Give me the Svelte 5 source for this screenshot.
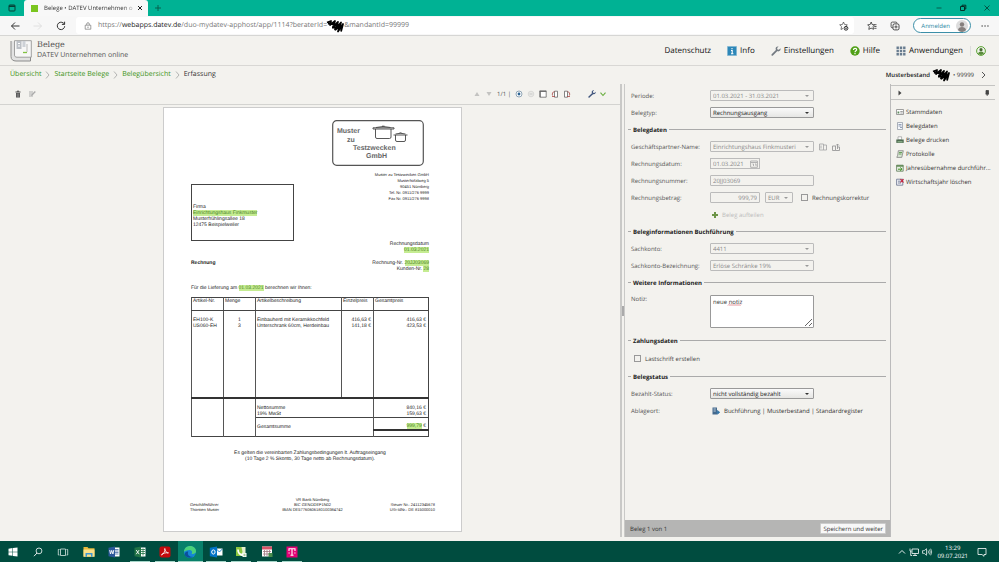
<script>
  const crumbs = ['Übersicht', 'Startseite Belege', 'Belegübersicht'];
  const tasks = [
    ['card', 'Stammdaten'],
    ['doc', 'Belegdaten'],
    ['print', 'Belege drucken'],
    ['log', 'Protokolle'],
    ['year', 'Jahresübernahme durchführ...'],
    ['del', 'Wirtschaftsjahr löschen']
  ];
  const apps = ['files', 'word', 'excel', 'pdf', 'edge', 'outlook', 'notes', 'calendar', 'telekom'];
  let note = $state('neue notiz');
</script>

{#snippet scribble()}
  <svg class="scribble" viewBox="0 0 17 14" aria-hidden="true">
    <path d="M0 3.500 4 2 3 6 8 2 6 8 11 3 8 10.500 14 3.500 11 12.500 16 5 14 12.500M1 4.500 14 6M5 8.500H15M8 11 13 7" fill="none" stroke="#000" stroke-width="1.800" stroke-linejoin="round" />
  </svg>
{/snippet}

{#snippet wrench(color)}
  <svg viewBox="0 0 10 10" class="i10" aria-hidden="true">
    <path d="M1.300 8.800 5.500 4.600" stroke={color} stroke-width="1.800" stroke-linecap="round" />
    <path d="M9.500 2.300 7.900 3.800 6.400 3.500 6.100 2 7.600.5C5.600.1 4.200 1.500 4.700 3.400L6.500 5.300C8.500 5.800 10 4.300 9.500 2.300Z" fill={color} />
  </svg>
{/snippet}

{#snippet taskIcon(kind)}
  <svg viewBox="0 0 8 8" class="i8" aria-hidden="true">
    {#if kind === 'card'}
      <path d="M.5 1.500h7v5h-7z" fill="#fff" stroke="#888" stroke-width=".8" /><path d="M1.500 3.500h1.800v2H1.500z" fill="#5d8a5d" /><path d="M4.300 3.500h2.500M4.300 5h2.500" stroke="#777" stroke-width=".7" />
    {:else if kind === 'doc'}
      <path d="M1.500.5h5v7h-5z" fill="#f4f7fb" stroke="#8b93a0" stroke-width=".7" /><path d="M2.500 2.500h3M2.500 4h3M4 5.500h2" stroke="#7c8ca8" stroke-width=".8" />
    {:else if kind === 'print'}
      <path d="M2 .8h3.600v3H2z" fill="#fff" stroke="#888" stroke-width=".6" /><path d="M.3 3.500h7.400v3.400H.3z" fill="#4d6b50" /><path d="M1.500 5.300h5v1h-5z" fill="#9fc49b" />
    {:else if kind === 'log'}
      <path d="M2.300.7h5L5.800 7.400H.8l.9-2.200z" fill="#d9e6d5" stroke="#777" stroke-width=".7" /><path d="M3 2.500h3M2.800 4h2.800" stroke="#4c8b3d" stroke-width=".8" />
    {:else if kind === 'year'}
      <path d="M.6 1.200h6.600v6H.6z" fill="#e9efe6" stroke="#5a7a55" stroke-width=".8" /><path d="M.6 1.200h6.600v1.500H.6z" fill="#5d8750" /><path d="M2 5.200h3.800M4.300 3.500 6 5.200 4.300 6.900" fill="none" stroke="#3c8f1e" stroke-width="1" />
    {:else}
      <path d="M.6 1.200h6.200v6H.6z" fill="#eef0f6" stroke="#66708c" stroke-width=".8" /><path d="M2 3.200h3M2 5h3" stroke="#66708c" stroke-width=".8" /><path d="m4.500 1 3 3.500m0-3.500-3 3.500" stroke="#c8102e" stroke-width="1.100" />
    {/if}
  </svg>
{/snippet}

{#snippet appIcon(kind)}
  <svg viewBox="0 0 14 14" class="i14" aria-hidden="true">
    {#if kind === 'files'}
      <path d="M1.500 2h4l1 1.200h6v8.300h-11z" fill="#e8b93c" /><path d="M1.500 4.500h11v7.300h-11z" fill="#fbe08a" /><path d="M3.500 8h7v3.800H9V9.600H5v2.200H3.500z" fill="#3f97d3" />
    {:else if kind === 'word' || kind === 'excel'}
      <path d="M7 2.500h5.500v9H7z" fill="#fff" />
      {#if kind === 'word'}
        <path d="M8 4.500h3.500M8 6h3.500M8 7.500h3.500M8 9h3.500" stroke="#2b579a" stroke-width=".7" />
      {:else}
        <path d="M8 4.500h4M8 6.500h4M8 8.500h4M10 3.500v7" stroke="#217346" stroke-width=".8" />
      {/if}
      <path d="M1.500 2.700 8 1.500v11L1.500 11.300z" fill={kind === 'word' ? '#2b579a' : '#217346'} />
      <path d={kind === 'word' ? 'M2.700 5l.8 4 1.200-3.600L5.900 9l.9-4' : 'M3.200 5l3 4.200m0-4.200-3 4.200'} fill="none" stroke="#fff" stroke-width=".9" />
    {:else if kind === 'pdf'}
      <rect x="1.500" y="1.500" width="11" height="11" rx="2" fill="#c4090d" /><path d="M6.800 3.500c.9 2-1.500 5.800-3.300 6.600-.8-.8 3.500-2.800 7-2.300C9.500 9 6.500 5.500 6.800 3.500Z" fill="none" stroke="#fff" stroke-width=".8" />
    {:else if kind === 'edge'}
      <circle cx="7" cy="7" r="6" fill="#1687d4" /><path d="M1 7C1 3 4 1 7 1c4 0 6 2.700 6 5.300C13 8.500 11 9.300 8.600 9c1.200-1.700.3-4-2.200-4C3.700 5 1.600 6 1 7Z" fill="#4bd17a" /><path d="M5.300 6.600c-1.400 2.900.8 5.700 4.500 5.200-2.700 1.900-6.500.8-8-1.800C1.500 8 3 6.200 5.300 6.600Z" fill="#0c4f9c" />
    {:else if kind === 'outlook'}
      <path d="M7 3.500h6.500v7H7z" fill="#fff" /><path d="m7.500 4 2.900 3 2.900-3" fill="none" stroke="#0072c6" stroke-width=".8" /><path d="M.8 2.700 8 1.500v11L.8 11.300z" fill="#0072c6" /><ellipse cx="4.400" cy="7" rx="1.700" ry="2.100" fill="none" stroke="#fff" stroke-width="1" />
    {:else if kind === 'notes'}
      <path d="M2 2h9.500v9H2z" fill="#e5efcf" /><path d="M2 2h5.500l1 5-2 4H2z" fill="#8cc63f" /><path d="M4 4.500C4 8 6 10 9.500 10" fill="none" stroke="#fff" stroke-width="1.700" /><path d="M8.500 8h4v4h-4z" fill="#fff" /><path d="M9.500 9.300h2M9.500 10.700h2" stroke="#6a9c45" stroke-width=".7" />
    {:else if kind === 'calendar'}
      <path d="M2 1.500h10v10H2z" fill="#fff" /><path d="M2 1.500h10v3H2z" fill="#d95468" /><path d="M3 6.500h8M3 9h8M4.500 5v6M7 5v6M9.500 5v6" stroke="#9d7780" stroke-width=".8" /><path d="M8.500 8h4v4h-4z" fill="#4a8d4d" />
    {:else}
      <path d="M1.500 1.500h11v11h-11z" fill="#e20074" /><path d="M4 6V3.700h6V6M7 3.700v6.600M5.500 10.300h3" fill="none" stroke="#fff" stroke-width="1.100" /><path d="M3.500 7.400h1.200v1.200H3.500zM9.300 7.400h1.200v1.200H9.300z" fill="#fff" />
    {/if}
  </svg>
{/snippet}

<div class="screen">
  <div class="tabs">
    <svg viewBox="0 0 8 8" class="i8 winicon" aria-hidden="true"><rect x="1" y="1" width="6" height="6" rx=".8" fill="none" stroke="#063f35" /><path d="M1 1.500h6v1.500H1z" fill="#063f35" /></svg>
    <div class="tab">
      <span class="fav"></span>
      <span class="title">Belege • DATEV Unternehmen o</span>
      <button aria-label="Tab schließen"><svg viewBox="0 0 6 6" class="i6"><path d="m1 1 4 4m0-4-4 4" stroke="#222" /></svg></button>
    </div>
    <button class="plus" aria-label="Neuer Tab"><svg viewBox="0 0 8 8" class="i8"><path d="M4 1v6M1 4h6" stroke="#07594b" stroke-width=".9" /></svg></button>
    <div class="wincontrols">
      <button aria-label="Minimieren"><svg viewBox="0 0 8 8" class="i8"><path d="M1.500 4h5" stroke="#06493d" stroke-width=".8" /></svg></button>
      <button aria-label="Verkleinern"><svg viewBox="0 0 8 8" class="i8"><path d="M1.500 2.500h4v4h-4zM3 2.500V1.200h3.800V5H5.500" fill="none" stroke="#032f27" /></svg></button>
      <button aria-label="Schließen"><svg viewBox="0 0 8 8" class="i8"><path d="m1.500 1.500 5 5m0-5-5 5" stroke="#06493d" stroke-width=".9" /></svg></button>
    </div>
  </div>

  <div class="address">
    <button aria-label="Zurück"><svg viewBox="0 0 10 10" class="i10"><path d="M9.500 5h-8M5 1.500 1.500 5 5 8.500" fill="none" stroke="#333" /></svg></button>
    <button aria-label="Vorwärts"><svg viewBox="0 0 10 10" class="i10"><path d="M.5 5h8M5 1.500 8.500 5 5 8.500" fill="none" stroke="#dcdcdc" stroke-width=".9" /></svg></button>
    <button aria-label="Neu laden"><svg viewBox="0 0 10 10" class="i10"><path d="M8.700 5.200A3.700 3.700 0 1 1 7.300 2L8.500 3.200M8.600.7v2.700H5.900" fill="none" stroke="#333" /></svg></button>
    <div class="field">
      <svg viewBox="0 0 8 8" class="i8" aria-hidden="true"><path d="M1.200 3.200h5.600v4H1.200zM2.700 3V2a1.300 1.300 0 0 1 2.600 0v1" fill="none" stroke="#777" stroke-width=".7" /><circle cx="4" cy="5.200" r=".6" fill="#777" /></svg>
      <span class="url">https://<b>webapps.datev.de</b>/duo-mydatev-apphost/app/1114?beraterId={@render scribble()}&amp;mandantId=99999</span>
      <svg viewBox="0 0 10 10" class="i10" aria-hidden="true"><path d="m4.500 1 1.100 2.500 2.700.3-1.500 1.600M4 7.400 2 8.500l.5-2.900L.7 3.800l2.700-.3L4.500 1" fill="none" stroke="#444" stroke-width=".7" /><circle cx="7" cy="7.300" r="1.900" fill="none" stroke="#333" /><path d="M7 6.300v2M6 7.300h2" stroke="#333" stroke-width=".6" /></svg>
    </div>
    <svg viewBox="0 0 10 10" class="i10" aria-hidden="true"><path d="m4.200 1 .9 2.500 2.200.3-1.200 1.700.4 2.800-2.400-1.200-2.300 1.300.5-2.800L.7 3.800l2.500-.3z" fill="none" stroke="#333" stroke-width=".8" /><path d="M7 3.700h2.500M7.200 5.500h2.300M7.200 7.300h2.300" stroke="#333" stroke-width=".8" /></svg>
    <svg viewBox="0 0 10 10" class="i10" aria-hidden="true"><path d="M3 6.800H2.300A1.200 1.200 0 0 1 1.100 5.600V2.300A1.200 1.200 0 0 1 2.300 1.100h3.600A1.200 1.200 0 0 1 7 2.300" fill="none" stroke="#333" stroke-width=".8" /><rect x="3" y="2.900" width="6" height="6" rx="1.500" fill="none" stroke="#333" stroke-width=".9" /><path d="M6 4.300v3.200M4.400 5.900h3.200" stroke="#333" stroke-width=".8" /></svg>
    <button class="login">Anmelden <svg viewBox="0 0 12 12" class="i12"><circle cx="6" cy="6" r="6" fill="#ddd" /><circle cx="6" cy="4.500" r="2.200" fill="#857f7d" /><path d="M2 10c.3-4 7.700-4 8 0-2 2.500-6 2.500-8 0Z" fill="#857f7d" /></svg></button>
    <button aria-label="Mehr" class="more"><svg viewBox="0 0 8 8" class="i8"><path d="M.5 4h1.300M3.400 4h1.300M6.300 4h1.300" stroke="#222" stroke-width="1.200" /></svg></button>
  </div>

  <header>
    <svg viewBox="0 0 22 22" class="logo" aria-hidden="true"><path d="M1 1v15.500C1 19.500 3 21 6 21h14.500V5" fill="#e2e2e2" stroke="#8c8c8c" /><path d="M4.500.7h16.800v16.500H7c-1.500 0-2.500-.7-2.500-2z" fill="#f7f7f7" stroke="#8c8c8c" stroke-width=".8" /><path d="M6.500 1h5v8h-5z" fill="#bcc0c6" /><path d="M12.500 1h3v6h-3z" fill="#cdd1d7" /><path d="M8 3.500h2M8 6h2" stroke="#fff" /><path d="M13 12.500h4" stroke="#82c341" stroke-width="1.300" /><path d="M17 4v8" stroke="#bbb" /></svg>
    <div class="brand"><strong>Belege</strong><span>DATEV Unternehmen online</span></div>
    <nav>
      <a href="#datenschutz">Datenschutz</a>
      <a href="#info"><svg viewBox="0 0 10 10" class="i10"><path d="M.5.500h9v9h-9z" fill="#2d87b8" stroke="#80b5d1" stroke-width=".7" /><path d="M5 2v1.300M4 4.500h1.200v3M4 7.700h2.400" stroke="#fff" fill="none" stroke-width="1.100" /></svg>Info</a>
      <a href="#einstellungen">{@render wrench('#747b82')}Einstellungen</a>
      <a href="#hilfe"><svg viewBox="0 0 10 10" class="i10"><circle cx="5" cy="5" r="4.700" fill="#50a017" /><path d="M3.500 3.900c0-2.200 3.200-2 3.200-.2C6.700 4.800 5 4.800 5 6.200M5 7v1.200" fill="none" stroke="#fff" stroke-width="1.200" /></svg>Hilfe</a>
      <a href="#anwendungen"><svg viewBox="0 0 10 10" class="i10"><path d="M.5 1.800h9M.5 5h9M.5 8.200h9" stroke="#687c8f" stroke-width="2.400" stroke-dasharray="2.400 .9" /></svg>Anwendungen</a>
      <a class="user" href="#profil" aria-label="Profil"><svg viewBox="0 0 10 10" class="i10"><circle cx="5" cy="5" r="4.400" fill="#eef3e8" stroke="#4b9a20" stroke-width=".9" /><circle cx="5" cy="3.700" r="1.600" fill="#496b35" /><path d="M2.100 7.800c.4-3 5.400-3 5.800 0-1.500 1.500-4.300 1.500-5.800 0Z" fill="#5a8c3b" /></svg></a>
    </nav>
  </header>

  <div class="crumbs">
    <div class="trail">
      {#each crumbs as c}
        <a href="#crumb">{c}</a>
        <svg viewBox="0 0 5 8" class="sep" aria-hidden="true"><path d="M1 .5 4 4 1 7.500" fill="none" stroke="#999" stroke-width=".7" /></svg>
      {/each}
      <span>Erfassung</span>
    </div>
    <div class="client"><b>Musterbestand</b>{@render scribble()}<span>• 99999</span><svg viewBox="0 0 5 8" class="sep" aria-hidden="true"><path d="M1 1 4 4 1 7" fill="none" stroke="#444" stroke-width=".9" /></svg></div>
  </div>

  <main>
    <section class="viewer">
      <div class="toolbar">
        <button aria-label="Löschen"><svg viewBox="0 0 8 8" class="i8"><path d="M1.500 2h5M3 1.200h2" stroke="#444" /><path d="M2 3h4v4.500H2z" fill="#555" /><path d="M3.300 3.500V7M4.700 3.500V7" stroke="#bbb" stroke-width=".4" /></svg></button>
        <button class="edit" aria-label="Bearbeiten"><svg viewBox="0 0 8 8" class="i8"><path d="M1 1h4v6H1z" fill="#d0d0ce" /><path d="m3 6 .5-1.600L6.800 1l1 1-3.400 3.500z" fill="#aaa" /></svg></button>
        <span class="space"></span>
        <button aria-label="Vorherige Seite"><svg viewBox="0 0 8 8" class="i8"><path d="m4 2 2.500 4h-5z" fill="#c3c3c1" /></svg></button>
        <button aria-label="Nächste Seite"><svg viewBox="0 0 8 8" class="i8"><path d="M4 6 1.500 2h5z" fill="#c3c3c1" /></svg></button>
        <span class="pages">1/1&nbsp;|</span>
        <button aria-label="Vergrößern"><svg viewBox="0 0 8 8" class="i8"><circle cx="4" cy="4" r="3" fill="#fff" stroke="#7691a5" stroke-width=".8" /><circle cx="4" cy="4" r="1.400" fill="#2c6492" /></svg></button>
        <button aria-label="Verkleinern"><svg viewBox="0 0 8 8" class="i8"><circle cx="4" cy="4" r="2.800" fill="#e9e9e6" stroke="#d4d4d2" stroke-width=".8" /><path d="M2.500 4h3" stroke="#c9c9c7" /></svg></button>
        <button aria-label="Einpassen"><svg viewBox="0 0 8 8" class="i8"><path d="M.8.800h6.400v6.400H.8z" fill="#fff" stroke="#666" stroke-width=".8" /><path d="M.8 1.500h6.400M1.300 1v6" stroke="#666" stroke-width=".9" /></svg></button>
        <button aria-label="Links drehen"><svg viewBox="0 0 8 8" class="i8"><path d="M3.500 1.200h3v6h-3z" fill="#fff" stroke="#666" stroke-width=".8" /><path d="M3.500 1.500C1.500 2 1 3.500 1.500 5.500M1 6.500h3" fill="none" stroke="#a84545" stroke-width=".8" /></svg></button>
        <button aria-label="Rechts drehen"><svg viewBox="0 0 8 8" class="i8"><path d="M1.500 1.200h3v6h-3z" fill="#fff" stroke="#666" stroke-width=".8" /><path d="M4.500 1.500C6.500 2 7 3.500 6.500 5.500M4 6.500h3" fill="none" stroke="#a84545" stroke-width=".8" /></svg></button>
        <button class="tools" aria-label="Werkzeuge"><span class="small">{@render wrench('#40557d')}</span><svg viewBox="0 0 8 8" class="i8"><path d="M1.500 2.700 4 5.500l2.500-2.800" fill="none" stroke="#67ad3c" stroke-width="1.100" /></svg></button>
      </div>

      <article class="paper">
        <svg class="stamp" viewBox="0 0 92 46">
          <rect x=".7" y=".7" width="90.600" height="44.600" rx="4" fill="#fff" stroke="#555" stroke-width="1.200" />
          <g font-family="Liberation Sans, Arial, sans-serif" font-size="7" font-weight="700" fill="#666"><text x="5" y="13">Muster</text><text x="15" y="21.500">zu</text><text x="21" y="29.500">Testzwecken</text><text x="34" y="37.500">GmbH</text></g>
          <g fill="none" stroke="#444" stroke-width=".9"><path d="M43.500 9V17q0 1.500 1.500 1.500H57.500Q59 18.500 59 17V9M41 9H62V7.800H41ZM44 7.500Q51 5.500 58.500 7.500M50 6.200h2.500" /><path d="M63.500 15v5q0 1.500 1.500 1.500h7q1.500 0 1.500-1.500v-5M61.500 15h14M63.500 14q5-1.500 10 0M67.500 13h2" /></g>
        </svg>
        <div class="top">
          <address class="window">Firma<br /><mark>Einrichtungshaus Finkmuster</mark><br />Musterfrühlingsallee 18<br />12475 Beispielweiler</address>
          <address class="sender">Muster zu Testzwecken GmbH<br />Musterhofalweg 5<br />90451 Nürnberg<br />Tel. Nr. 0911/276 9999<br />Fax Nr. 0911/276 9998</address>
        </div>
        <p class="right">Rechnungsdatum<br /><mark>01.03.2021</mark></p>
        <div class="head"><b>Rechnung</b><p class="right">Rechnung-Nr. <mark>20JJ03069</mark><br />Kunden-Nr. <mark>28</mark></p></div>
        <p class="intro">Für die Lieferung am <mark>01.03.2021</mark> berechnen wir Ihnen:</p>
        <table>
          <colgroup><col class="c1" /><col class="c1" /><col /><col class="c1" /><col class="c5" /></colgroup>
          <thead><tr><th>Artikel-Nr.</th><th>Menge</th><th>Artikelbeschreibung</th><th>Einzelpreis</th><th>Gesamtpreis</th></tr></thead>
          <tbody>
            <tr class="first"><td>EH100-K</td><td class="mid">1</td><td>Einbauherd mit Keramikkochfeld</td><td class="num">416,63 €</td><td class="num">416,63 €</td></tr>
            <tr><td>US060-EH</td><td class="mid">3</td><td>Unterschrank 60cm, Herdeinbau</td><td class="num">141,18 €</td><td class="num">423,53 €</td></tr>
            <tr class="fill"><td></td><td></td><td></td><td></td><td></td></tr>
          </tbody>
          <tfoot>
            <tr class="net"><td></td><td></td><td colspan="2">Nettosumme</td><td class="num">840,16 €</td></tr>
            <tr><td></td><td></td><td colspan="2">19% MwSt</td><td class="num">159,63 €</td></tr>
            <tr class="sum"><td></td><td></td><td class="ruled" colspan="2">Gesamtsumme</td><td class="num ruled total"><mark>999,79</mark> €</td></tr>
            <tr class="end"><td></td><td></td><td colspan="2"></td><td></td></tr>
          </tfoot>
        </table>
        <p class="terms">Es gelten die vereinbarten Zahlungsbedingungen lt. Auftragseingang<br />(10 Tage 2 % Skonto, 30 Tage netto ab Rechnungsdatum).</p>
        <footer class="imprint">
          <p>Geschäftsführer<br />Thorsten Muster</p>
          <p class="bank">VR Bank Nürnberg<br />BIC GENODEF1N02<br />IBAN DE57760606180100384742</p>
          <p class="right">Steuer Nr.: 24112345678<br />USt-IdNr.: DE 815000010</p>
        </footer>
      </article>
    </section>

    <div class="splitter"><i></i></div>

    <form onsubmit={(e) => e.preventDefault()}>
      <div class="rows">
        <div class="row"><label for="periode">Periode:</label><select id="periode" disabled><option>01.03.2021 - 31.03.2021</option></select></div>
        <div class="row"><label for="typ">Belegtyp:</label><select id="typ" class="live"><option>Rechnungsausgang</option></select></div>

        <h2>Belegdaten</h2>
        <div class="row"><label for="partner">Geschäftspartner-Name:</label><select id="partner" disabled><option>Einrichtungshaus Finkmusteri</option></select>
          <svg viewBox="0 0 8 8" class="i8 aside" aria-hidden="true"><path d="M.5 1h4v6h-4zM4.500 2h3v5h-3M2 2.500v3" fill="none" stroke="#aaa" stroke-width=".9" /></svg>
          <svg viewBox="0 0 8 8" class="i8 aside" aria-hidden="true"><path d="M.5 3h3v4.500h-3zM3.500 7.500h4V4H5.500M5.500 6V1M4 2.500 5.500 1 7 2.500" fill="none" stroke="#999" stroke-width=".9" /></svg>
        </div>
        <div class="row"><label for="datum">Rechnungsdatum:</label><span class="date"><input id="datum" value="01.03.2021" disabled /><svg viewBox="0 0 8 8" class="i8" aria-hidden="true"><path d="M.6 1h6.800v6.300H.6zM.6 2.500h6.800M2.500 4h1v2M5 4h1v2" fill="none" stroke="#aaa" stroke-width=".9" /></svg></span></div>
        <div class="row"><label for="nummer">Rechnungsnummer:</label><input id="nummer" class="wide" value="20JJ03069" disabled /></div>
        <div class="row"><label for="betrag">Rechnungsbetrag:</label><input id="betrag" class="amount" value="999,79" disabled /><select class="currency" aria-label="Währung" disabled><option>EUR</option></select><input type="checkbox" id="korrektur" disabled /><label class="check" for="korrektur">Rechnungskorrektur</label></div>
        <div class="row indent"><button class="split" type="button" disabled><svg viewBox="0 0 8 8" class="i8"><path d="M4 1v6M1 4h6" stroke="#6c9447" stroke-width="2" /></svg>Beleg aufteilen</button></div>

        <h2>Beleginformationen Buchführung</h2>
        <div class="row"><label for="konto">Sachkonto:</label><select id="konto" disabled><option>4411</option></select></div>
        <div class="row"><label for="bez">Sachkonto-Bezeichnung:</label><select id="bez" disabled><option>Erlöse Schränke 19%</option></select></div>

        <h2>Weitere Informationen</h2>
        <div class="row note"><label for="notiz">Notiz:</label><div class="noteBox"><textarea id="notiz" spellcheck="false" bind:value={note}></textarea><svg class="spelling" viewBox="0 0 14 2" aria-hidden="true"><path d="M0 1.500 1 .5l1 1 1-1 1 1 1-1 1 1 1-1 1 1 1-1 1 1 1-1 1 1 1-1" fill="none" stroke="#d9606a" stroke-width=".7" /></svg></div></div>

        <h2>Zahlungsdaten</h2>
        <div class="row debit"><input type="checkbox" id="last" /><label class="check" for="last">Lastschrift erstellen</label></div>

        <h2>Belegstatus</h2>
        <div class="row"><label for="status">Bezahlt-Status:</label><select id="status" class="live"><option>nicht vollständig bezahlt</option></select></div>
        <div class="row"><span class="label">Ablageort:</span><svg viewBox="0 0 8 8" class="i8 place" aria-hidden="true"><path d="M.5.500h4.500v7H.5z" fill="#44698c" /><path d="M1.500 2h2.300M1.500 4h2.300" stroke="#dde9f3" stroke-width=".8" /><path d="M4 5.300h2M5.500 3.500 7.700 5.300 5.500 7.200z" fill="#3474a6" stroke="#3474a6" stroke-width=".8" /></svg><span class="path">Buchführung | Musterbestand | Standardregister</span></div>
      </div>
      <div class="status"><span>Beleg 1 von 1</span><button>Speichern und weiter</button></div>
    </form>

    <aside>
      <div class="asidehead">
        <svg viewBox="0 0 8 8" class="i8" aria-hidden="true"><path d="M2.500 1.500 5.500 4l-3 2.500z" fill="#444" /></svg>
        <svg viewBox="0 0 8 8" class="i8" aria-hidden="true"><path d="M3 1.500h2.500V5H3zM2.500 5h3.500M4.200 5v2" fill="#444" stroke="#444" stroke-width=".8" /></svg>
      </div>
      <ul>
        {#each tasks as [kind, text]}
          <li><a href="#aufgabe">{@render taskIcon(kind)}{text}</a></li>
        {/each}
      </ul>
    </aside>
  </main>

  <div class="taskbar">
    <div class="system">
      <button aria-label="Start"><svg viewBox="0 0 10 10" class="i10"><path d="M.5 1.700 4.500 1.100V4.700h-4zM5 1l4.500-.6v4.300H5zM.5 5.200h4v3.600L.5 8.300zM5 5.200h4.500v4.400L5 9z" fill="#fff" /></svg></button>
      <button aria-label="Suche"><svg viewBox="0 0 10 10" class="i10"><circle cx="6" cy="3.900" r="2.900" fill="none" stroke="#fff" stroke-width=".8" /><path d="M4 6 1 9.200" stroke="#fff" stroke-width=".9" /></svg></button>
      <button aria-label="Aktive Anwendungen"><svg viewBox="0 0 10 10" class="i10"><path d="M2.500 2h5v6.500h-5zM1.500 2.500H.3V8h1.200M8.500 2.500h1.200V8H8.500" fill="none" stroke="#d8e7e2" stroke-width=".8" /></svg></button>
    </div>
    <div class="apps">
      {#each apps as a, i}
        <button class:open={i > 1} class:active={a === 'edge'} aria-label={a}>{@render appIcon(a)}</button>
      {/each}
    </div>
    <div class="tray">
      <svg viewBox="0 0 8 8" class="i8" aria-hidden="true"><path d="m1 5.500 3-3 3 3" fill="none" stroke="#fff" stroke-width=".9" /></svg>
      <svg viewBox="0 0 10 10" class="i10" aria-hidden="true"><path d="M3 2h6.500v4.500H3zM6 6.500v2M4 8.500h4M1 1.500v2.500h1.500M1.700 4v4.500h1.500" fill="none" stroke="#fff" stroke-width=".8" /></svg>
      <svg viewBox="0 0 10 10" class="i10" aria-hidden="true"><path d="M.5 3.700h1.700L4.500 1.700v6.600L2.200 6.300H.5zM6 3.500q1 1.500 0 3M7.400 2.500q1.700 2.500 0 5M8.700 1.700q2 3.300 0 6.600" fill="none" stroke="#fff" stroke-width=".7" /></svg>
      <time>13:29<br />09.07.2021</time>
      <svg viewBox="0 0 10 10" class="i10" aria-hidden="true"><path d="M1 1.500h8v6H7v1.800L5 7.500H1z" fill="none" stroke="#fff" stroke-width=".8" /></svg>
    </div>
  </div>
</div>

<style>
  :global(body) { margin: 0; background: #f3f2ee; }
  * { box-sizing: border-box; }
  .screen { display: flex; flex-direction: column; min-height: 100vh; background: #f3f2ee; color: #333; font: 6px/8px 'Open Sans', 'Noto Sans', sans-serif; text-rendering: geometricPrecision; }
  svg { display: block; flex: none; overflow: visible; }
  .i6 { width: 6px; height: 6px; }
  .i8 { width: 8px; height: 8px; }
  .i10 { width: 10px; height: 10px; }
  .i12 { width: 12px; height: 12px; }
  .i14 { width: 14px; height: 14px; }
  .scribble { width: 17px; height: 14px; }
  button { display: flex; align-items: center; justify-content: center; margin: 0; padding: 0; border: 0; background: none; color: inherit; font: inherit; text-rendering: inherit; }
  a { color: inherit; text-decoration: none; }
  p, h2, ul { margin: 0; padding: 0; }

  .tabs { display: flex; align-items: center; height: 16px; background: #00b294; }
  .winicon { margin: 0 8px; }
  .tab { display: flex; align-items: center; align-self: stretch; width: 124px; padding: 0 5px 0 7px; background: #f8f8f8; border-radius: 3px 3px 0 0; color: #333; }
  .fav { flex: none; width: 7px; height: 7px; margin-right: 6px; background: #7ac51f; }
  .title { flex: 1; overflow: hidden; white-space: nowrap; -webkit-mask-image: linear-gradient(90deg, #000 85%, transparent); mask-image: linear-gradient(90deg, #000 85%, transparent); }
  .plus { margin-left: 6px; }
  .wincontrols { display: flex; gap: 16px; margin-left: auto; padding-right: 8px; }

  .address { display: flex; align-items: center; gap: 13px; height: 20px; padding: 0 10px; background: #f7f7f7; border-bottom: 1px solid #d6d6d4; }
  .field { display: flex; flex: 1; align-items: center; height: 17px; margin-left: -3px; padding: 0 5px 0 8px; border-radius: 3px; background: #fff; }
  .url { display: flex; flex: 1; align-items: center; padding-left: 6px; color: #777; font-size: 7px; }
  .url b { color: #222; font-weight: 400; }
  .login { gap: 6px; height: 15px; padding: 0 2px 0 7px; border: 1px solid #3c8fa8; border-radius: 8px; background: #fff; color: #2b87a3; }
  .more { margin-left: -3px; }

  header { display: flex; align-items: center; height: 30px; padding: 0 13px 0 10px; border-bottom: 1px solid #d8d7d4; }
  .logo { width: 22px; height: 22px; }
  .brand { display: flex; flex-direction: column; gap: 1px; margin-left: 5px; color: #555; font-size: 7px; line-height: 10px; }
  .brand strong { font: 400 8px/10px 'DejaVu Serif', serif; }
  nav { display: flex; align-items: center; gap: 16px; margin-left: auto; color: #111; font-size: 8px; line-height: 10px; }
  nav a { display: flex; align-items: center; gap: 3px; }
  .user { margin-left: -9px; padding-left: 5px; border-left: 1px solid #ddd; }

  .crumbs { display: flex; align-items: center; justify-content: space-between; height: 17px; padding: 0 13px 0 10px; }
  .trail { display: flex; align-items: center; gap: 4px; font-size: 7px; }
  .trail a { color: #3f9420; }
  .sep { width: 5px; height: 8px; }
  .client { display: flex; align-items: center; gap: 3px; }
  .client b { color: #222; font-weight: 600; }
  .client .sep { margin-left: 4px; }

  main { display: flex; flex: 1; padding: 1px 4px 4px 0; }
  .viewer { flex: 1; }
  .toolbar { display: flex; align-items: center; gap: 4px; height: 21px; padding: 0 13px 0 14px; border-bottom: 1px solid #d3d3d0; }
  .edit { margin-left: 2px; }
  .space { flex: 1; }
  .pages { color: #555; }
  .tools { gap: 3px; margin-left: 13px; }
  .small :global(svg) { width: 8px; height: 8px; }

  .viewer { display: flex; flex-direction: column; }
  .paper { width: 299px; min-height: 425px; margin: 2px auto 0; padding: 12px 32px 0 27px; border: 1px solid #ccc; background: #fff; color: #222; font: 5px/6px 'Liberation Sans', Arial, sans-serif; }
  .viewer .paper { align-self: center; margin-left: 5px; margin-right: 0; }
  .stamp { width: 92px; height: 46px; margin: 0 5px 0 auto; }
  .top { display: flex; align-items: flex-start; justify-content: space-between; padding-top: 6px; }
  address { font-style: normal; }
  .window { width: 103px; height: 57px; margin-top: 12px; padding: 19px 0 0 1px; border: 1px solid #444; }
  .sender { font-size: 4px; text-align: right; }
  mark { background: #c5ec92; color: #467f20; }
  .right { text-align: right; }
  .head { display: flex; justify-content: space-between; margin: 7px 0 13px; }
  .intro { margin-bottom: 6px; }
  table { width: 100%; border: 1px solid #444; border-collapse: collapse; table-layout: fixed; }
  .c1 { width: 32px; }
  .c5 { width: 55px; }
  th, td { height: 6px; padding: 0 1px; border-left: 1px solid #555; font-weight: 400; line-height: 6px; text-align: left; vertical-align: bottom; white-space: nowrap; }
  th { height: 13px; border-bottom: 1px solid #444; vertical-align: top; }
  .first td { height: 12px; }
  .fill td { height: 69px; }
  .net td { height: 13px; border-top: 2px solid #333; }
  .mid { text-align: center; }
  .num { padding-right: 2px; text-align: right; }
  .sum td { height: 13px; }
  .ruled { border-top: 1px solid #444; }
  .total { border-bottom: 2px solid #333; }
  .terms { margin-top: 13px; text-align: center; }
  .imprint { display: grid; grid-template-columns: 1fr auto 1fr; align-items: end; margin: 35px -6px 0 -1px; font-size: 4px; line-height: 5px; }
  .bank { text-align: center; }

  .splitter { display: flex; align-items: center; width: 5px; border: solid #c9c9c7; border-width: 0 1px 0 2px; }
  .splitter i { width: 2px; height: 10px; background: #aaa; }

  form { display: flex; flex-direction: column; width: 266px; border-right: 1px solid #bbb; }
  .rows { flex: 1; padding: 3px 4px 0 3px; }
  .row { display: flex; align-items: center; height: 17px; padding-left: 3px; }
  .row > label:not(.check), .label { flex: none; width: 79px; color: #555; }
  h2 { display: flex; align-items: center; gap: 2px; height: 17px; color: #222; font-size: 6px; line-height: 8px; font-weight: 700; }
  h2::before, h2::after { width: 3px; height: 1px; background: #aaa; content: ''; }
  h2::after { flex: 1; }
  select, input, textarea { margin: 0; padding: 0 2px; border: 1px solid #bbb; border-radius: 1px; outline: 0; background: #f3f2ee; color: #888; font: inherit; text-rendering: inherit; opacity: 1; }
  select { width: 104px; height: 11px; appearance: none; background: url("data:image/svg+xml,%3Csvg xmlns='http://www.w3.org/2000/svg' viewBox='0 0 4 2'%3E%3Cpath d='M0 0h4L2 2z' fill='%23999'/%3E%3C/svg%3E") right 4px center / 4px 2px no-repeat #f3f2ee; }
  select.live { border-color: #999; background: url("data:image/svg+xml,%3Csvg xmlns='http://www.w3.org/2000/svg' viewBox='0 0 4 2'%3E%3Cpath d='M0 0h4L2 2z' fill='%23333'/%3E%3C/svg%3E") right 4px center / 4px 2px no-repeat, linear-gradient(#fafafa, #e6e6e4); color: #222; }
  .aside { margin-left: 5px; }
  .date { display: flex; align-items: center; width: 50px; height: 11px; padding-right: 1px; border: 1px solid #bbb; }
  .date input { flex: 1; min-width: 0; border: 0; }
  input.wide { width: 104px; height: 11px; }
  .amount { width: 50px; height: 11px; text-align: right; }
  .currency { width: 28px; margin: 0 8px 0 5px; }
  input[type='checkbox'] { width: 7px; height: 7px; margin-right: 4px; padding: 0; appearance: none; border-radius: 0; border-color: #999; }
  .indent { padding-left: 83px; }
  .split { gap: 3px; color: #bbb; }
  .note { align-items: flex-start; height: 41px; padding-top: 4px; }
  .noteBox { position: relative; width: 104px; height: 33px; }
  textarea { display: block; width: 104px; height: 33px; border-color: #999; background: #fff; color: #333; resize: both; padding-top: 2px; }
  .spelling { position: absolute; top: 9px; left: 18px; width: 14px; height: 2px; }
  .debit { height: 19px; padding-left: 6px; }
  .check { color: #444; }
  .place { margin: 0 4px 0 2px; }
  .status { display: flex; align-items: center; justify-content: space-between; height: 17px; padding: 0 4px 0 5px; background: #b5b5b4; }
  .status button { height: 11px; padding: 0 2px; border: 1px solid #ccc; border-radius: 1px; background: #f8f8f8; color: #333; }

  aside { width: 104px; padding-top: 1px; }
  .asidehead { display: flex; align-items: center; justify-content: space-between; height: 15px; padding: 0 4px 0 5px; border: solid #c4c4c2; border-width: 1px 0; }
  ul { padding: 5px 0 0 5px; list-style: none; }
  li a { display: flex; align-items: center; gap: 2px; height: 14px; white-space: nowrap; }

  .taskbar { display: flex; height: 21px; background: #004c3f; color: #fff; }
  .system { display: flex; width: 76px; }
  .system button { width: 25px; }
  .apps { display: flex; width: 229px; }
  .apps button { flex: 1; }
  .apps .open { background: linear-gradient(#a5d5c8, #a5d5c8) bottom / 20px 1px no-repeat; }
  .apps .active { background-size: 100% 1px; background-color: #08806a; }
  .tray { display: flex; align-items: center; gap: 3px; margin-left: auto; padding-right: 12px; }
  time { margin: 0 6px 0 2px; text-align: center; }
</style>
